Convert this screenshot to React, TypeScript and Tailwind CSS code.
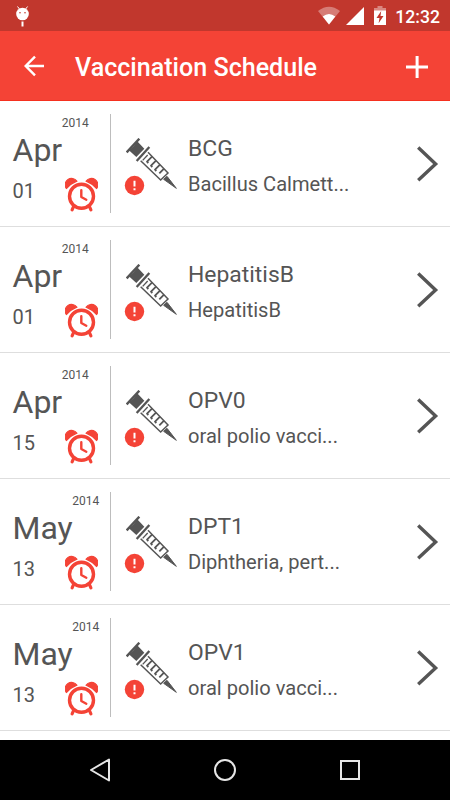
type Vaccine = {
  month: string;
  day: string;
  year: string;
  name: string;
  description: string;
};

const vaccines: Vaccine[] = [
  { month: "Apr", day: "01", year: "2014", name: "BCG", description: "Bacillus Calmett..." },
  { month: "Apr", day: "01", year: "2014", name: "HepatitisB", description: "HepatitisB" },
  { month: "Apr", day: "15", year: "2014", name: "OPV0", description: "oral polio vacci..." },
  { month: "May", day: "13", year: "2014", name: "DPT1", description: "Diphtheria, pert..." },
  { month: "May", day: "13", year: "2014", name: "OPV1", description: "oral polio vacci..." },
];

function AlarmIcon() {
  return (
    <svg width="33" height="36" viewBox="0 0 33 36" fill="none" stroke="#f44336">
      <path d="M1.2 11.2A5.7 5.7 0 0 1 11.8 4.2Q6 6.4 1.6 11.4Z" fill="#f44336" strokeWidth="1.2" />
      <path d="M31.8 11.2A5.7 5.7 0 0 0 21.2 4.2Q27 6.4 31.4 11.4Z" fill="#f44336" strokeWidth="1.2" />
      <circle cx="16.5" cy="19.3" r="12" strokeWidth="3.4" />
      <path d="M8.3 30.2L7.1 32.8M24.7 30.2L25.9 32.8" strokeWidth="3.2" strokeLinecap="round" />
      <path d="M16.3 13.3V20L21.3 22.7" strokeWidth="2.4" strokeLinecap="round" strokeLinejoin="round" />
    </svg>
  );
}

function SyringeIcon() {
  return (
    <svg width="52" height="52" viewBox="55 41 156 156" fill="none" stroke="#555">
      <path d="M57 84L95 43" strokeWidth="7" />
      <path d="M62 76Q77 73 88 50L110 73L86 98Z" fill="#555" stroke="none" />
      <path d="M87 110L125 68" strokeWidth="7" />
      <path d="M99 109L159 167L181 146L121 84" strokeWidth="4.5" />
      <path d="M105 108L120 92" strokeWidth="4" />
      <path
        d="M133 97L118 112L122 116M145 109L130 124L134 128M157 121L142 136L146 140M169 133L155 147"
        strokeWidth="5.5"
        strokeLinejoin="round"
      />
      <path d="M168 165L178 156L206 192Z" fill="#555" stroke="#555" strokeWidth="3" />
    </svg>
  );
}

function AlertBadge() {
  return (
    <svg className="absolute left-[-2.5px] top-[36.5px]" width="21" height="21" viewBox="0 0 21 21">
      <circle cx="10.5" cy="10.5" r="9.7" fill="#f44336" />
      <path d="M9.5 5.7h2v5.9h-2zM9.5 13.2h2v2h-2z" fill="#fff" />
    </svg>
  );
}

function VaccineRow({ vaccine }: { vaccine: Vaccine }) {
  return (
    <li className="flex h-[126px] shrink-0 border-b border-[#dedede] py-[13px] text-[#555]">
      <div className="flex w-[111px] flex-col border-r border-[#bdbdbd] pl-[12.5px]">
        <div className="flex h-[56px] items-start">
          <span className="pt-[16px] text-[32px] leading-[40px]">{vaccine.month}</span>
          <span className="-ml-[0.5px] pt-[1px] text-[12px] leading-[16px]">{vaccine.year}</span>
        </div>
        <div className="flex justify-between pr-[12px]">
          <span className="pt-[9px] text-[20px] leading-[24px]">{vaccine.day}</span>
          <div className="pt-[7px]">
            <AlarmIcon />
          </div>
        </div>
      </div>
      <div className="relative ml-[15px] mt-[24px] w-[62px]">
        <SyringeIcon />
        <AlertBadge />
      </div>
      <div className="flex-1">
        <div className="pt-[21px] text-[22.9px] leading-[28px]">{vaccine.name}</div>
        <div className="pt-[8px] text-[20.1px] leading-[26px]">{vaccine.description}</div>
      </div>
      <svg className="mr-[10px] mt-[32px]" width="24" height="36" viewBox="0 0 24 36" fill="none" stroke="#555" strokeWidth="3.4">
        <path d="M2.2 1.6L19.6 18L2.2 34.2" />
      </svg>
    </li>
  );
}

function StatusBar() {
  return (
    <div className="flex h-[31px] items-center bg-[#c1372d] text-white">
      <svg className="ml-[15px]" width="16" height="22" viewBox="0 0 16 22">
        <path d="M2.5 1.5L4.6 4.2M12.6 1.5L10.5 4.2" stroke="#fff" strokeWidth="1" />
        <circle cx="7.5" cy="9" r="6.3" fill="#fff" />
        <path d="M6.5 16.5h2v5h-2z" fill="#fff" />
        <circle cx="5" cy="7.7" r="0.8" fill="#c1372d" />
        <circle cx="10" cy="7.7" r="0.8" fill="#c1372d" />
      </svg>
      <svg className="ml-auto" width="22" height="19" viewBox="0 0 22 19">
        <path d="M0 5Q11 -3.5 22 5L11 18.5Z" fill="#fff" fillOpacity="0.35" />
        <path d="M4.7 10.5Q11 5.3 17.3 10.5L11 18.5Z" fill="#fff" />
      </svg>
      <svg className="ml-[6px]" width="18" height="18" viewBox="0 0 18 18">
        <path d="M18 0V18H0Z" fill="#fff" />
      </svg>
      <svg className="ml-[10px]" width="12" height="19" viewBox="0 0 12 19">
        <path d="M3.5 0h5v2H12v4H0V2h3.5z" fill="#fff" fillOpacity="0.4" />
        <path d="M0 4.5h12V19H0z" fill="#fff" />
        <path d="M7.2 5L2.5 12h3l-.9 5.3L9.5 10h-3z" fill="#c1372d" />
      </svg>
      <span className="ml-[9px] mr-[10px] pt-[2px] text-[17.6px] font-medium leading-[22px]">12:32</span>
    </div>
  );
}

export default function App() {
  return (
    <div className="flex h-[800px] w-[450px] flex-col overflow-hidden bg-white font-['Roboto',sans-serif]">
      <StatusBar />
      <header className="flex h-[70px] items-center border-b border-[#f5301f] bg-[#f44336] text-white">
        <svg className="ml-[24px] mt-px" width="22" height="22" viewBox="0 0 22 22" fill="none" stroke="#fff" strokeWidth="2.4">
          <path d="M20 11H3M11 1.7L1.7 11L11 20.3" />
        </svg>
        <h1 className="ml-[29px] flex-1 pt-[4px] text-[25.1px] font-medium leading-[30px]">Vaccination Schedule</h1>
        <svg className="mr-[21px] mt-[2px]" width="24" height="24" viewBox="0 0 24 24">
          <path d="M10.6 1h3v9.5H23v3h-9.4V23h-3v-9.5H1v-3h9.6z" fill="#fff" />
        </svg>
      </header>

      <ul className="flex h-[639px] flex-col overflow-hidden">
        {vaccines.map((v, i) => (
          <VaccineRow key={i} vaccine={v} />
        ))}
      </ul>

      <nav className="flex h-[60px] items-center bg-black">
        <svg className="ml-[88px]" width="24" height="24" viewBox="0 0 24 24" fill="none" stroke="#e6e6e6" strokeWidth="2">
          <path d="M21 1.5V22.5L3 12Z" strokeLinejoin="round" />
        </svg>
        <svg className="ml-[101px]" width="24" height="24" viewBox="0 0 24 24" fill="none" stroke="#e6e6e6" strokeWidth="2">
          <circle cx="12" cy="12" r="10" />
        </svg>
        <svg className="ml-[101px]" width="24" height="24" viewBox="0 0 24 24" fill="none" stroke="#e6e6e6" strokeWidth="2">
          <rect x="3" y="3" width="18" height="18" />
        </svg>
      </nav>
    </div>
  );
}
